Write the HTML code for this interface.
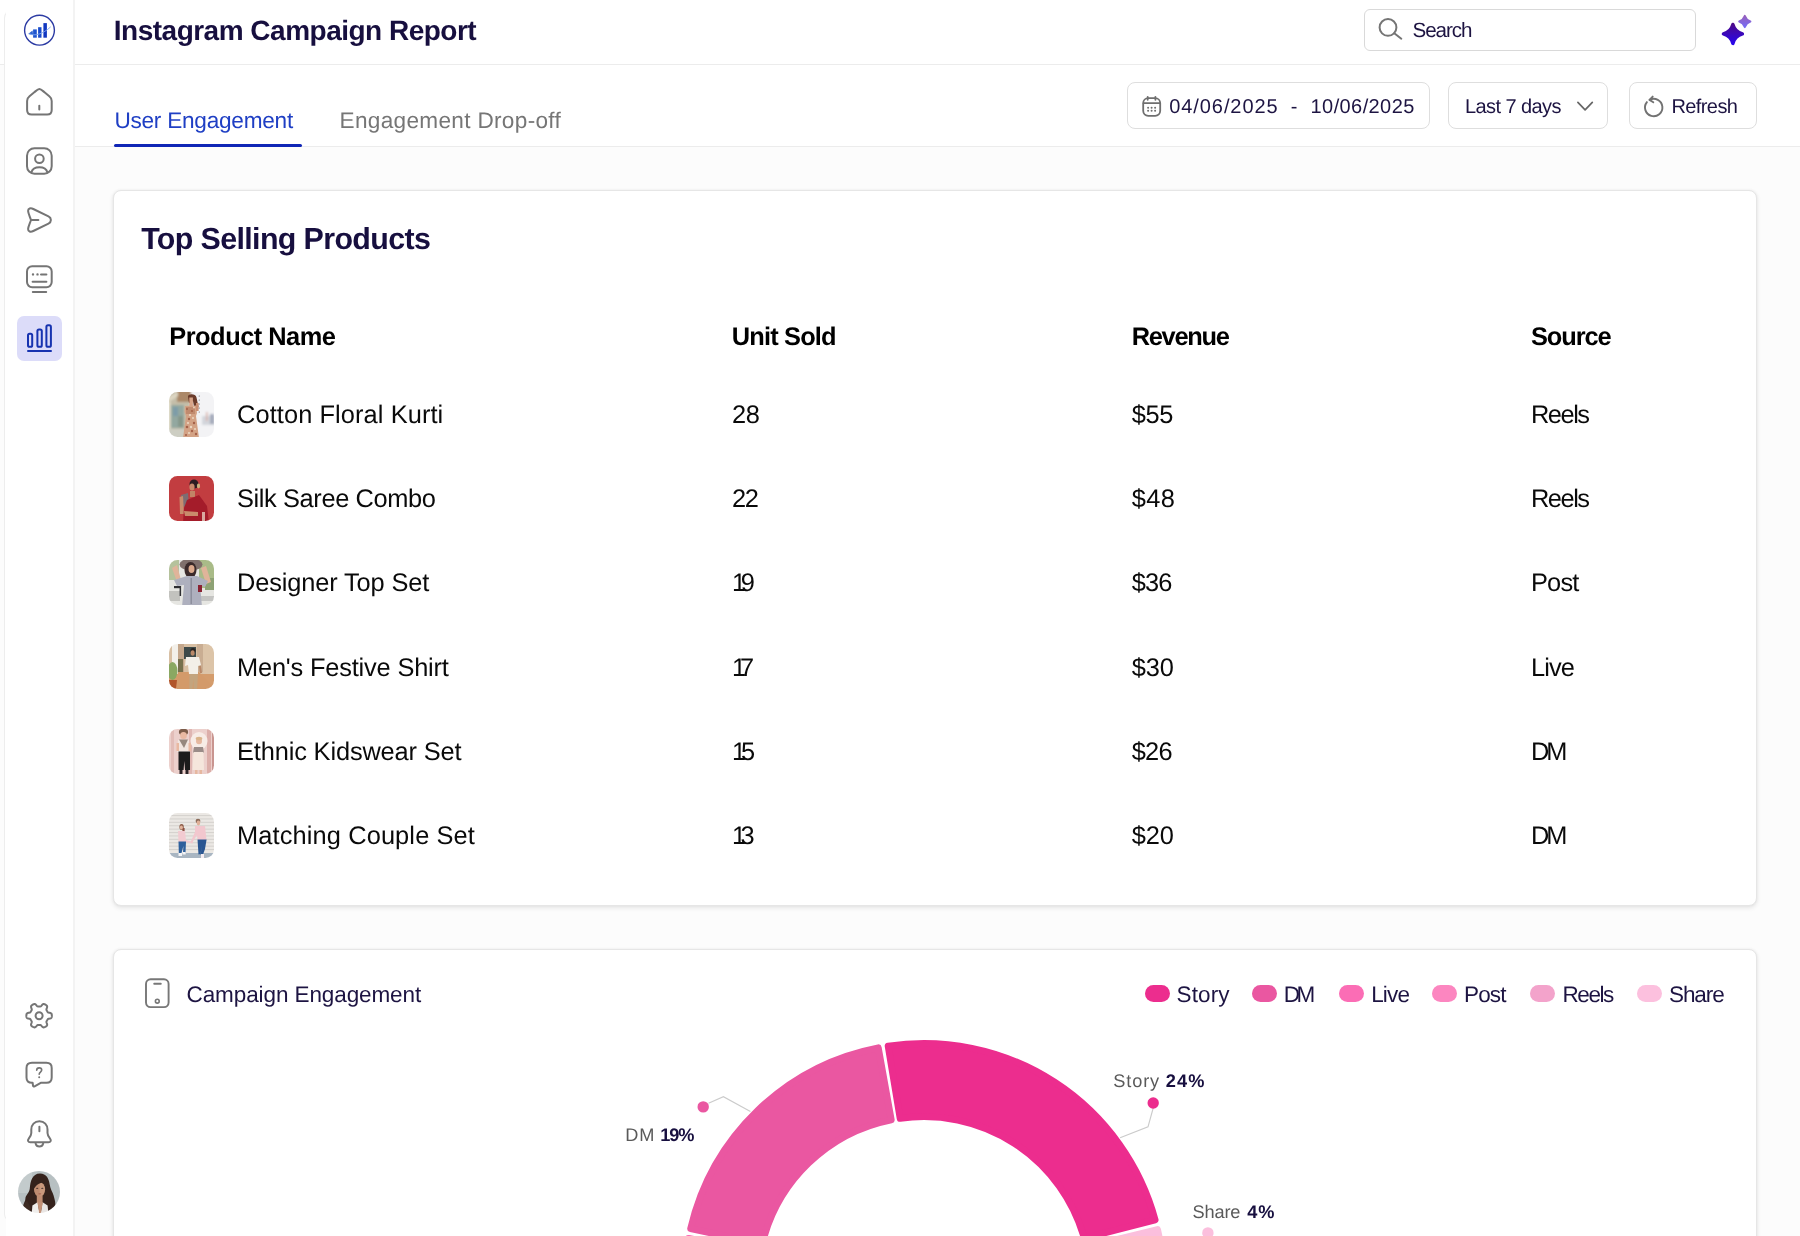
<!DOCTYPE html>
<html lang="en">
<head>
<meta charset="utf-8">
<title>Instagram Campaign Report</title>
<style>
html,body{margin:0;padding:0}
body{width:1800px;height:1236px;overflow:hidden;position:relative;background:#fcfcfc;
  font-family:"Liberation Sans",sans-serif;text-rendering:geometricPrecision;}
.abs{position:absolute}
.t{position:absolute;white-space:nowrap;line-height:1}
.box{position:absolute;box-sizing:border-box;background:#fff;border:1px solid #dedede;border-radius:8px}
.card{position:absolute;box-sizing:border-box;background:#fff;border:1px solid #e6e6e6;border-radius:8px;
  box-shadow:0 2px 5px rgba(0,0,0,.09),0 0 3px rgba(0,0,0,.05)}
.th{position:absolute;left:169px;width:45px;height:45px}
</style>
</head>
<body>
<!-- header + tab bar backgrounds -->
<div class="abs" style="left:0;top:0;width:1800px;height:64px;background:#fff;border-bottom:1px solid #ececec"></div>
<div class="abs" style="left:74px;top:65px;width:1726px;height:81px;background:#fff;border-bottom:1px solid #ececec"></div>
<!-- sidebar -->
<div class="abs" style="left:4px;top:10px;width:70px;height:1212px;box-sizing:border-box;background:#fff;border:1px solid #ededed;border-right:none;border-radius:8px 0 0 8px"></div>
<div class="abs" style="left:6px;top:0;width:67px;height:20px;background:#fff"></div>
<div class="abs" style="left:6px;top:1215px;width:67px;height:21px;background:#fff"></div>
<div class="abs" style="left:73px;top:0;width:2px;height:1236px;background:#f3f3f3"></div>
<!-- active tab underline -->
<div class="abs" style="left:114px;top:144px;width:188px;height:3px;background:#1026b6;border-radius:2px"></div>

<!-- header controls -->
<div class="box" style="left:1364px;top:9px;width:332px;height:42px;border-radius:6px;border-color:#d9d9d9"></div>
<div class="box" style="left:1127px;top:82px;width:303px;height:47px"></div>
<div class="box" style="left:1448px;top:82px;width:160px;height:47px"></div>
<div class="box" style="left:1629px;top:82px;width:128px;height:47px"></div>

<!-- cards -->
<div class="card" style="left:113px;top:190px;width:1644px;height:716px"></div>
<div class="card" style="left:113px;top:949px;width:1644px;height:400px"></div>

<svg class="abs" style="left:0;top:0" width="1800" height="1236" viewBox="0 0 1800 1236" fill="none" stroke-linecap="round" stroke-linejoin="round">
<!-- logo -->
<g>
<circle cx="39.5" cy="30.2" r="14.9" stroke="#2b3aa3" stroke-width="1.4" fill="#fff"/>
<rect x="33.1" y="29.4" width="3.7" height="8.3" fill="#1d55cf"/>
<rect x="38.1" y="27.2" width="3.4" height="10.5" fill="#184bcb"/>
<rect x="43.4" y="23.1" width="3.5" height="14.6" fill="#1238c0"/>
<path d="M28.1 33.9 L32.6 30.6 L33.1 35 Z" fill="#2a62cf"/>
<path d="M29.5 33.9 C35 36.5 43 34 50.4 27.1" stroke="#7fa6ee" stroke-width="0.9"/>
</g>
<!-- sidebar icons -->
<g stroke="#757575" stroke-width="2">
<!-- home -->
<path d="M34.3 92.3 C36.6 90.4 37.8 89.1 39.4 89.1 C41 89.1 42.2 90.4 44.5 92.3 L49.3 96.2 C50.9 97.5 51.7 98.7 51.7 100.9 L51.7 110 Q51.7 114.5 47.2 114.5 L31.6 114.5 Q27.1 114.5 27.1 110 L27.1 100.9 C27.1 98.7 27.9 97.5 29.5 96.2 Z"/>
<path d="M39.3 105.8 V109.6"/>
<!-- user square -->
<rect x="27" y="148.2" width="24.7" height="25.5" rx="7.5" ry="7.5"/>
<circle cx="39.4" cy="158.8" r="4.3"/>
<path d="M31.4 172.3 C33.2 165.4 45.6 165.4 47.4 172.3"/>
<!-- send -->
<path d="M31 220 C29.8 216.4 28.2 213.2 28.1 211 C28 208.4 30.6 207.7 33.3 209 L48.5 216.4 C51.7 218 51.7 222 48.5 223.6 L33.3 231 C30.6 232.3 28 231.6 28.1 229 C28.2 226.8 29.8 223.6 31 220 Z"/>
<path d="M31 220 H38.4"/>
<!-- monitor -->
<rect x="27" y="266.2" width="24.7" height="21" rx="5.2" ry="5.2"/>
<path d="M33 274.4 h0.01 M37.5 274.4 h0.01" stroke-width="2.4"/>
<path d="M41 274.4 H46.4 M32.6 281.7 H46.4 M32.8 292 H46.2"/>
<!-- gear (generated) -->
<path d="M51.85 1015.70 L51.84 1016.03 L51.82 1016.37 L51.78 1016.70 L51.72 1017.03 L51.63 1017.35 L51.49 1017.66 L51.26 1017.95 L50.90 1018.21 L50.37 1018.41 L49.73 1018.55 L49.08 1018.66 L48.55 1018.77 L48.18 1018.92 L47.93 1019.09 L47.75 1019.28 L47.60 1019.48 L47.47 1019.69 L47.35 1019.90 L47.23 1020.11 L47.11 1020.33 L46.99 1020.53 L46.87 1020.74 L46.74 1020.95 L46.63 1021.17 L46.53 1021.40 L46.45 1021.65 L46.43 1021.96 L46.49 1022.35 L46.65 1022.86 L46.88 1023.48 L47.08 1024.11 L47.17 1024.66 L47.13 1025.10 L46.99 1025.45 L46.80 1025.73 L46.56 1025.97 L46.31 1026.19 L46.04 1026.38 L45.76 1026.57 L45.48 1026.74 L45.18 1026.90 L44.88 1027.05 L44.58 1027.18 L44.26 1027.30 L43.94 1027.38 L43.59 1027.41 L43.23 1027.36 L42.83 1027.17 L42.39 1026.82 L41.95 1026.33 L41.53 1025.82 L41.17 1025.42 L40.86 1025.17 L40.58 1025.04 L40.32 1024.98 L40.07 1024.95 L39.83 1024.95 L39.58 1024.95 L39.34 1024.95 L39.10 1024.95 L38.86 1024.95 L38.62 1024.95 L38.37 1024.95 L38.13 1024.95 L37.88 1024.98 L37.62 1025.04 L37.34 1025.17 L37.03 1025.42 L36.67 1025.82 L36.25 1026.33 L35.81 1026.82 L35.37 1027.17 L34.97 1027.36 L34.61 1027.41 L34.26 1027.38 L33.94 1027.30 L33.62 1027.18 L33.32 1027.05 L33.02 1026.90 L32.73 1026.74 L32.44 1026.57 L32.16 1026.38 L31.89 1026.19 L31.64 1025.97 L31.40 1025.73 L31.21 1025.45 L31.07 1025.10 L31.03 1024.66 L31.12 1024.11 L31.32 1023.48 L31.55 1022.86 L31.71 1022.35 L31.77 1021.96 L31.75 1021.65 L31.67 1021.40 L31.57 1021.17 L31.46 1020.95 L31.33 1020.74 L31.21 1020.53 L31.09 1020.33 L30.97 1020.11 L30.85 1019.90 L30.73 1019.69 L30.60 1019.48 L30.45 1019.28 L30.27 1019.09 L30.02 1018.92 L29.65 1018.77 L29.12 1018.66 L28.47 1018.55 L27.83 1018.41 L27.30 1018.21 L26.94 1017.95 L26.71 1017.66 L26.57 1017.35 L26.48 1017.03 L26.42 1016.70 L26.38 1016.37 L26.36 1016.03 L26.35 1015.70 L26.36 1015.37 L26.38 1015.03 L26.42 1014.70 L26.48 1014.37 L26.57 1014.05 L26.71 1013.74 L26.94 1013.45 L27.30 1013.19 L27.83 1012.99 L28.47 1012.85 L29.12 1012.74 L29.65 1012.63 L30.02 1012.48 L30.27 1012.31 L30.45 1012.12 L30.60 1011.92 L30.73 1011.71 L30.85 1011.50 L30.97 1011.29 L31.09 1011.08 L31.21 1010.87 L31.33 1010.66 L31.46 1010.45 L31.57 1010.23 L31.67 1010.00 L31.75 1009.75 L31.77 1009.44 L31.71 1009.05 L31.55 1008.54 L31.32 1007.92 L31.12 1007.29 L31.03 1006.74 L31.07 1006.30 L31.21 1005.95 L31.40 1005.67 L31.64 1005.43 L31.89 1005.21 L32.16 1005.02 L32.44 1004.83 L32.72 1004.66 L33.02 1004.50 L33.32 1004.35 L33.62 1004.22 L33.94 1004.10 L34.26 1004.02 L34.61 1003.99 L34.97 1004.04 L35.37 1004.23 L35.81 1004.58 L36.25 1005.07 L36.67 1005.58 L37.03 1005.98 L37.34 1006.23 L37.62 1006.36 L37.88 1006.42 L38.13 1006.45 L38.37 1006.45 L38.62 1006.45 L38.86 1006.45 L39.10 1006.45 L39.34 1006.45 L39.58 1006.45 L39.83 1006.45 L40.07 1006.45 L40.32 1006.42 L40.58 1006.36 L40.86 1006.23 L41.17 1005.98 L41.53 1005.58 L41.95 1005.07 L42.39 1004.58 L42.83 1004.23 L43.23 1004.04 L43.59 1003.99 L43.94 1004.02 L44.26 1004.10 L44.58 1004.22 L44.88 1004.35 L45.18 1004.50 L45.48 1004.66 L45.76 1004.83 L46.04 1005.02 L46.31 1005.21 L46.56 1005.43 L46.80 1005.67 L46.99 1005.95 L47.13 1006.30 L47.17 1006.74 L47.08 1007.29 L46.88 1007.92 L46.65 1008.54 L46.49 1009.05 L46.43 1009.44 L46.45 1009.75 L46.53 1010.00 L46.63 1010.23 L46.74 1010.45 L46.87 1010.66 L46.99 1010.87 L47.11 1011.08 L47.23 1011.29 L47.35 1011.50 L47.47 1011.71 L47.60 1011.92 L47.75 1012.12 L47.93 1012.31 L48.18 1012.48 L48.55 1012.63 L49.08 1012.74 L49.73 1012.85 L50.37 1012.99 L50.90 1013.19 L51.26 1013.45 L51.49 1013.74 L51.63 1014.05 L51.72 1014.37 L51.78 1014.70 L51.82 1015.03 L51.84 1015.37 Z"/>
<circle cx="39.1" cy="1015.7" r="3.5"/>
<!-- help chat -->
<path d="M32 1062.8 H46.4 Q51.7 1062.8 51.7 1068 V1077.4 Q51.7 1082.7 46.4 1082.7 H41.2 L34.6 1086.4 Q33.2 1087 33 1085.5 L32.6 1082.7 H32 Q26.5 1082.7 26.5 1077.4 V1068 Q26.5 1062.8 32 1062.8 Z"/>
<path d="M36.7 1070.3 C36.7 1068.6 37.8 1067.9 39.2 1067.9 C40.7 1067.9 41.7 1068.8 41.7 1070.1 C41.7 1072 39.2 1072.1 39.2 1074.2" stroke-width="1.6"/>
<path d="M39.2 1077.3 h0.01" stroke-width="2"/>
<!-- bell -->
<path d="M39.4 1121.2 C34.5 1121.2 31.3 1124.8 31.3 1129.5 L31.3 1133 C31.3 1135.5 30 1137.2 28.6 1138.8 C27.3 1140.4 28.2 1142.3 30.3 1142.3 L48.5 1142.3 C50.6 1142.3 51.5 1140.4 50.2 1138.8 C48.8 1137.2 47.5 1135.5 47.5 1133 L47.5 1129.5 C47.5 1124.8 44.3 1121.2 39.4 1121.2 Z"/>
<path d="M35.6 1143.4 C36.2 1145.7 37.7 1146.5 39.4 1146.5 C41.1 1146.5 42.6 1145.7 43.2 1143.4"/>
<path d="M39.4 1126.7 V1131.2"/>
</g>
<!-- active analytics -->
<rect x="17" y="316" width="45" height="45" rx="7" ry="7" fill="#dcdcf9"/>
<g stroke="#1733b0" stroke-width="2">
<rect x="28" y="333.8" width="4.2" height="13" rx="1.6"/>
<rect x="37.4" y="329.5" width="4.4" height="17.3" rx="1.6"/>
<rect x="46.4" y="325.3" width="4.5" height="21.5" rx="1.6"/>
<path d="M28 350.9 H51"/>
</g>
<!-- search icon -->
<g stroke="#757575" stroke-width="2">
<circle cx="1388" cy="27.4" r="8.4"/>
<path d="M1394.3 33.2 L1401.3 38.7"/>
</g>
<!-- sparkle -->
<defs><linearGradient id="spk" x1="0" y1="0" x2="0" y2="1"><stop offset="0" stop-color="#4c0a8c"/><stop offset="1" stop-color="#2906ea"/></linearGradient>
<linearGradient id="spk2" x1="0" y1="0" x2="0" y2="1"><stop offset="0" stop-color="#9660be"/><stop offset="1" stop-color="#766cf4"/></linearGradient></defs>
<path d="M1732.90 24.45 A13.71 13.71 0 0 0 1742.40 33.95 A13.71 13.71 0 0 0 1732.90 43.45 A13.71 13.71 0 0 0 1723.40 33.95 A13.71 13.71 0 0 0 1732.90 24.45 Z" fill="url(#spk)" stroke="url(#spk)" stroke-width="3.4"/>
<path d="M1744.80 16.00 A9.01 9.01 0 0 0 1750.30 21.50 A9.01 9.01 0 0 0 1744.80 27.00 A9.01 9.01 0 0 0 1739.30 21.50 A9.01 9.01 0 0 0 1744.80 16.00 Z" fill="url(#spk2)" stroke="url(#spk2)" stroke-width="2.2"/>
<!-- calendar -->
<g stroke="#6f6f6f" stroke-width="1.8">
<rect x="1143.2" y="98.2" width="17" height="17.6" rx="5" ry="5"/>
<path d="M1147.7 96.8 V99.8 M1155.4 96.8 V99.8 M1143.6 103.2 H1159.8"/>
<path d="M1148.1 107.8 h0.01 M1151.6 107.8 h0.01 M1155.1 107.8 h0.01 M1148.1 110.7 h0.01 M1151.6 110.7 h0.01 M1155.1 110.7 h0.01" stroke-width="2"/>
</g>
<!-- chevron -->
<path d="M1577.9 102.4 L1585.1 109.8 L1592.3 102.4" stroke="#666" stroke-width="1.7"/>
<!-- refresh -->
<g stroke="#727272" stroke-width="1.9">
<path d="M1649.64 99.85 A8.7 8.7 0 1 1 1646.9 102.12"/>
<path d="M1652.7 96.6 L1649.5 99.9 L1653.3 102.2"/>
</g>
<!-- phone -->
<g stroke="#777" stroke-width="1.9">
<rect x="146" y="979.3" width="22.6" height="27.8" rx="4.6" ry="4.6"/>
<path d="M154.2 983.8 H160.8"/>
<circle cx="157.3" cy="1001.2" r="1.9" stroke-width="1.6"/>
</g>
</svg>

<svg width="0" height="0" style="position:absolute"><defs>
<clipPath id="rc"><rect x="0" y="0" width="45" height="45" rx="8.5" ry="8.5"/></clipPath>
<clipPath id="cc"><circle cx="21" cy="21" r="21"/></clipPath>
<filter id="b1" x="-10%" y="-10%" width="120%" height="120%"><feGaussianBlur stdDeviation="0.7"/></filter>
<filter id="b2" x="-10%" y="-10%" width="120%" height="120%"><feGaussianBlur stdDeviation="1.2"/></filter>
</defs></svg>
<!-- 1 cotton floral kurti -->
<svg class="th" style="top:391.5px" viewBox="0 0 45 45"><g clip-path="url(#rc)"><g filter="url(#b2)">
<rect x="-3" y="-3" width="51" height="51" fill="#f1f1f3"/>
<rect x="-3" y="-3" width="24" height="51" fill="#c4bea9"/>
<rect x="8" y="-3" width="14" height="13" fill="#ab8868"/>
<path d="M-3 6 L9 0 L9 4 L-3 12 Z" fill="#ddd6c2"/>
<rect x="2" y="13" width="13" height="23" fill="#93a8a0"/>
<rect x="4" y="15" width="5" height="9" fill="#7d9ca8"/>
<rect x="9" y="24" width="5" height="11" fill="#86978a"/>
<rect x="-2" y="10" width="3.5" height="30" fill="#e6e1cf"/>
<rect x="-3" y="37" width="19" height="11" fill="#cdcec3"/>
<rect x="29.5" y="-3" width="18" height="51" fill="#f3f3f5"/>
<rect x="33" y="24" width="13" height="9" fill="#d3d6dc"/>
<rect x="41" y="22" width="4" height="10" fill="#a4aabc"/>
<rect x="37" y="20" width="1.6" height="9" fill="#d8b0a8"/>
</g><g filter="url(#b1)">
<path d="M19 4.5 C19 1.5 27 1.5 27.5 5.5 L29.5 15 L25 15 L24 9 L20 11 Z" fill="#6a3a2a"/>
<path d="M20.3 5.5 h3.6 v8.5 h-3.6z" fill="#d8a488"/>
<path d="M16 14 L27 13.5 L28 21 L27 24 L30 46 L14 46 L17 24 L15.5 20 Z" fill="#d3a285"/>
<path d="M17 15 h9 v7 h-9z" fill="#c08a6e"/>
<path d="M27 11 h2.6 v8 h-2.6z" fill="#c98e72"/>
<g fill="#a5624a"><circle cx="18" cy="17" r="1"/><circle cx="23" cy="19" r="1.1"/><circle cx="20" cy="27" r="1.2"/><circle cx="25" cy="31" r="1.2"/><circle cx="18" cy="35" r="1.3"/><circle cx="23" cy="39" r="1.2"/><circle cx="27" cy="42" r="1.2"/><circle cx="17" cy="43" r="1.1"/></g>
<g fill="#ecd8c2"><circle cx="21" cy="23" r="1.1"/><circle cx="24" cy="26" r="1"/><circle cx="19" cy="31" r="1.1"/><circle cx="22" cy="35" r="1.2"/><circle cx="26" cy="37" r="1"/><circle cx="20" cy="41" r="1.1"/><circle cx="25" cy="15.5" r=".9"/></g>
<g fill="#4a4a52"><circle cx="30.2" cy="4" r=".5"/><circle cx="30.2" cy="8" r=".5"/><circle cx="30.2" cy="12" r=".5"/><circle cx="30.2" cy="16" r=".5"/><circle cx="30.2" cy="20" r=".5"/></g>
</g></g></svg>
<!-- 2 silk saree -->
<svg class="th" style="top:475.8px" viewBox="0 0 45 45"><g clip-path="url(#rc)"><g filter="url(#b1)">
<rect x="-2" y="-2" width="49" height="49" fill="#c23d41"/>
<ellipse cx="25" cy="8" rx="4.5" ry="4.5" fill="#2b1c22"/>
<ellipse cx="23" cy="11" rx="2.6" ry="3.6" fill="#c78a6c"/>
<ellipse cx="29.5" cy="10" rx="1.6" ry="2.4" fill="#c9b27c"/>
<path d="M21 15 h5 v6 h-5z" fill="#c18466"/>
<path d="M12 19 L19 17 L20 30 L13 31 Z" fill="#7d6c72"/>
<path d="M10.5 21 L14 20 L15 38 L11 38 Z" fill="#c98c6c"/>
<path d="M18 24 L30 19 L38 30 L40 47 L14 47 L15 32 Z" fill="#a41c2b"/>
<path d="M15 35 L29 36 L29 40 L16 40 Z" fill="#c98c6c"/>
<path d="M33 36 h3 v11 h-3z" fill="#d9a9a0"/>
</g></g></svg>
<!-- 3 designer top set -->
<svg class="th" style="top:560.1px" viewBox="0 0 45 45"><g clip-path="url(#rc)"><g filter="url(#b1)">
<rect x="-2" y="-2" width="49" height="49" fill="#e6e6e2"/>
<rect x="-2" y="-2" width="12" height="22" fill="#b5c29c"/>
<rect x="30" y="-2" width="17" height="30" fill="#a9bb88"/>
<rect x="36" y="18" width="11" height="12" fill="#8ea274"/>
<rect x="-2" y="31" width="13" height="10" fill="#c2c2be"/>
<rect x="5" y="26" width="7" height="2.2" fill="#2e2e32"/>
<rect x="10.6" y="26" width="1.5" height="10" fill="#2e2e32"/>
<rect x="28" y="36" width="19" height="5" fill="#c4c4c2"/>
<ellipse cx="22" cy="4.5" rx="11.5" ry="6" fill="#80706c"/>
<ellipse cx="21.5" cy="10" rx="6" ry="8" fill="#3a2a2a"/>
<ellipse cx="22.5" cy="9" rx="3" ry="4" fill="#dba98c"/>
<path d="M3 8 L8 5 L12 20 L8 22 Z" fill="#e0b49a"/>
<path d="M32 8 L37 6 L42 22 L37 24 Z" fill="#e0b49a"/>
<path d="M5 20 L18 16 L28 16 L39 21 L36 27 L31 25 L33 47 L13 47 L15 25 L8 26 Z" fill="#aeb0be"/>
<rect x="21.5" y="18" width="1.4" height="26" fill="#8a8c9a"/>
<rect x="29" y="25" width="4" height="7" fill="#8a2132"/>
</g></g></svg>
<!-- 4 men's festive shirt -->
<svg class="th" style="top:644.4px" viewBox="0 0 45 45"><g clip-path="url(#rc)"><g filter="url(#b1)">
<rect x="-2" y="-2" width="49" height="49" fill="#d8bfa3"/>
<rect x="3" y="-2" width="6" height="34" fill="#f3f0ea"/>
<rect x="9" y="-2" width="6" height="30" fill="#c4a78c"/>
<rect x="28" y="-2" width="6" height="30" fill="#c9ad92"/>
<rect x="34" y="-2" width="13" height="40" fill="#dcc4a8"/>
<rect x="15" y="3" width="12" height="12" fill="#3c4a48"/>
<rect x="-2" y="30" width="49" height="17" fill="#d49c6c"/>
<path d="M9 28 L30 28 L47 45 L47 47 L8 47 Z" fill="#d39a6a"/>
<rect x="9" y="15" width="5" height="13" fill="#76704e"/>
<ellipse cx="3.5" cy="27" rx="5" ry="9" fill="#8aa862"/>
<path d="M-1 36 h9 l-1 9 h-7z" fill="#b1542c"/>
<ellipse cx="24" cy="6.5" rx="2.6" ry="2.6" fill="#2a2320"/>
<ellipse cx="23.6" cy="9" rx="2" ry="2.8" fill="#b98868"/>
<path d="M17 13 L30 13 L32 21 L29 22 L29 30 L20 30 L19 21 L16 22 Z" fill="#f3efe8"/>
<path d="M20.5 30 h8.5 l-1 17 h-3.3 l-.4-12 l-1 12 h-3z" fill="#c3a47e"/>
<path d="M30 22 l2 0 l1 7 l-2 0z" fill="#b98868"/>
</g></g></svg>
<!-- 5 ethnic kidswear -->
<svg class="th" style="top:728.7px" viewBox="0 0 45 45"><g clip-path="url(#rc)"><g filter="url(#b1)">
<rect x="-2" y="-2" width="49" height="49" fill="#ecd0cc"/>
<rect x="2" y="-2" width="3" height="49" fill="#e2bdb8"/>
<rect x="20" y="-2" width="3" height="49" fill="#dfb6b2"/>
<rect x="38" y="-2" width="4" height="49" fill="#dcaea9"/>
<rect x="43" y="-2" width="4" height="49" fill="#c99590"/>
<ellipse cx="30" cy="12" rx="8.5" ry="9" fill="#f7ece6"/>
<ellipse cx="14.5" cy="3" rx="4.6" ry="3.2" fill="#7c5c4a"/>
<ellipse cx="14.5" cy="6.5" rx="3.4" ry="3.6" fill="#e9b9a2"/>
<ellipse cx="30" cy="12" rx="3" ry="3.3" fill="#e6b8a0"/>
<ellipse cx="30" cy="9.5" rx="3.3" ry="1.8" fill="#d9b48a"/>
<path d="M9 11 L20 11 L21 23 L8 23 Z" fill="#f1e6e0"/>
<path d="M10 10.5 L19 10.5 L15 19 Z" fill="#96887e"/>
<path d="M7.5 14 h2.5 v8 h-2.5z M19.5 14 h2.5 v8 h-2.5z" fill="#e9b9a2"/>
<path d="M9.5 22.5 L21 22.5 L21 41 L16 41 L15.3 32 L14.6 41 L9.5 41 Z" fill="#1c1c1e"/>
<path d="M10.5 41 h3 v4 h-3z M16.5 41 h3 v4 h-3z" fill="#2a2226"/>
<path d="M25 18 L34 18 L35 24 L24 24 Z" fill="#9a8c88"/>
<path d="M24.5 23 L34.5 23 L35 41 L23.5 41 Z" fill="#f5e6dc"/>
<path d="M26 41 h2.5 v4 h-2.5z M30.5 41 h2.5 v4 h-2.5z" fill="#e6b8a0"/>
</g></g></svg>
<!-- 6 matching couple -->
<svg class="th" style="top:813px" viewBox="0 0 45 45"><g clip-path="url(#rc)"><g filter="url(#b1)">
<rect x="-2" y="-2" width="49" height="49" fill="#ebe8e4"/>
<g fill="#d6d3cf"><rect x="-2" y="2" width="49" height="1.1"/><rect x="-2" y="5.4" width="49" height="1.1"/><rect x="-2" y="8.8" width="49" height="1.1"/><rect x="-2" y="12.2" width="49" height="1.1"/><rect x="-2" y="15.6" width="49" height="1.1"/><rect x="-2" y="19" width="49" height="1.1"/><rect x="-2" y="22.4" width="49" height="1.1"/><rect x="-2" y="25.8" width="49" height="1.1"/><rect x="-2" y="29.2" width="49" height="1.1"/><rect x="-2" y="32.6" width="49" height="1.1"/><rect x="-2" y="36" width="49" height="1.1"/></g>
<rect x="-2" y="40" width="49" height="7" fill="#a9b6c2"/>
<ellipse cx="12.6" cy="14" rx="2.2" ry="3" fill="#8c5c48"/>
<rect x="13.4" y="15" width="2.2" height="8" fill="#8c5040"/>
<ellipse cx="12.4" cy="14.6" rx="1.5" ry="2" fill="#e3b49c"/>
<path d="M9 18 L16 18 L17 27 L24 29 L23.6 30.4 L16 29 L9.5 29 Z" fill="#f2cbd1"/>
<path d="M9.5 28.5 L17 28.5 L16.5 40 L14 40 L14.4 33 L12.5 40 L9.8 40 Z" fill="#2f609c"/>
<path d="M9.5 40 h3.5 v3 h-3.5z M13.5 39 h3.2 v2.6 h-3.2z" fill="#f4f4f6"/>
<ellipse cx="29" cy="8" rx="2.4" ry="2.2" fill="#8c6c5a"/>
<ellipse cx="29.4" cy="10" rx="1.8" ry="2.4" fill="#e0b098"/>
<path d="M26 13 L36 13 L37.5 27 L28.5 27 L28 22 L23 30 L21.6 29 L26 19 Z" fill="#f2c7ce"/>
<path d="M28.5 26.5 L37.6 26.5 L36 36 L33.5 43 L31.5 41.5 L33 33 L31.5 41 L29.5 41.5 Z" fill="#2a5792"/>
<path d="M32 41 h3 v4 h-3z" fill="#f6eef2"/>
</g></g></svg>
<!-- avatar -->
<svg class="abs" style="left:18.4px;top:1170.6px" width="42" height="42" viewBox="0 0 42 42"><g clip-path="url(#cc)"><g filter="url(#b1)">
<rect x="-2" y="-2" width="46" height="46" fill="#b7c0c2"/>
<rect x="-2" y="-2" width="16" height="24" fill="#c3cbcc"/>
<path d="M22 2.6 C28.5 2.6 31 8 31.6 13 C32.2 18 34.5 20.5 35.6 24.5 C36.8 29 38 32 37 36 C36 40 32 43 28 45 L13 45 C8 43 4.5 40 5 35.5 C5.4 32 7.5 30.5 7.4 27.5 C7.3 24.5 11.4 22 11.8 17.5 C12.3 11 14 2.6 22 2.6 Z" fill="#35241e"/>
<path d="M9 30 C6 31 5 35 7 38 C9 40 12 40 13 37 Z" fill="#3d2a22"/>
<ellipse cx="21.6" cy="18.6" rx="5.5" ry="7.4" fill="#c9987c"/>
<path d="M16.2 17 C16.4 12.5 19 10.8 21.5 10.8 L21.5 26 C18.5 25.5 16.2 22 16.2 17 Z" fill="#b98669" opacity=".7"/>
<path d="M18.8 24.5 h5.8 v9 h-5.8z" fill="#bf8d72"/>
<path d="M15.5 13.5 C17 9 24.5 7.5 28.6 12.5 C25.5 11.2 20 11 16.2 17.5 Z" fill="#35241e"/>
<path d="M14.4 34.6 L19.6 31.2 L21.8 44 L13.6 44 Z" fill="#f0eeec"/>
<path d="M29.6 34.6 L24.6 31.2 L22.4 44 L30.6 44 Z" fill="#e9e6e4"/>
<path d="M19.4 31.2 L21.6 44 L22.6 44 L24.8 31.2 Z" fill="#c39176"/>
<g fill="#3a2a26"><ellipse cx="19.2" cy="17.3" rx="1.1" ry=".55"/><ellipse cx="24.3" cy="17.3" rx="1.1" ry=".55"/></g>
<ellipse cx="21.8" cy="22.8" rx="1.5" ry=".6" fill="#a8604f"/>
</g></g></svg>

<svg class="abs" style="left:0;top:0" width="1800" height="1236" viewBox="0 0 1800 1236">
<path d="M888.14 1046.10 A239.60 239.60 0 0 1 1155.14 1219.88 L1084.25 1238.17 A166.40 166.40 0 0 0 900.12 1118.32 Z" fill="#ec2d8e" stroke="#ec2d8e" stroke-width="6.8" stroke-linejoin="round"/><path d="M1157.56 1229.56 A239.60 239.60 0 0 1 1163.60 1281.52 L1090.39 1280.94 A166.40 166.40 0 0 0 1086.44 1246.90 Z" fill="#fbbfdd" stroke="#fbbfdd" stroke-width="6.8" stroke-linejoin="round"/><path d="M690.67 1228.56 A239.60 239.60 0 0 1 878.31 1047.80 L891.25 1119.85 A166.40 166.40 0 0 0 762.19 1244.18 Z" fill="#ea57a1" stroke="#ea57a1" stroke-width="6.8" stroke-linejoin="round"/><path d="M762.52 1460.01 A239.60 239.60 0 0 1 688.60 1238.32 L760.33 1252.99 A166.40 166.40 0 0 0 811.09 1405.23 Z" fill="#fb6db5" stroke="#fb6db5" stroke-width="6.8" stroke-linejoin="round"/>
<path d="M1153.2 1108 L1148 1126.8 L1120.1 1137.8" fill="none" stroke="#cbcbcb" stroke-width="1.15"/>
<circle cx="1153.2" cy="1103" r="5.7" fill="#ec2d8e"/>
<path d="M708.5 1103.2 L723.4 1096.7 L750.4 1111.6" fill="none" stroke="#cbcbcb" stroke-width="1.15"/>
<circle cx="703.2" cy="1106.9" r="5.7" fill="#ea57a1"/>
<circle cx="1207.9" cy="1232.9" r="5.7" fill="#fbbfdd"/>
</svg>
<div class="abs" style="left:1145.0px;top:985px;width:25px;height:17px;border-radius:9px;background:#ec2d8e"></div>
<div class="abs" style="left:1251.8px;top:985px;width:25px;height:17px;border-radius:9px;background:#ea57a1"></div>
<div class="abs" style="left:1338.9px;top:985px;width:25px;height:17px;border-radius:9px;background:#fb6db5"></div>
<div class="abs" style="left:1431.7px;top:985px;width:25px;height:17px;border-radius:9px;background:#fc86c0"></div>
<div class="abs" style="left:1530.1px;top:985px;width:25px;height:17px;border-radius:9px;background:#f3a3cb"></div>
<div class="abs" style="left:1636.9px;top:985px;width:25px;height:17px;border-radius:9px;background:#fcc0de"></div>

<div id="txt" style="position:absolute;left:0;top:0;width:1800px;height:1236px;will-change:transform"><span class="t" style="left:113.80px;top:15px;font-size:28.00px;line-height:32px;letter-spacing:-0.504px;color:#170f3f;font-weight:700;">Instagram Campaign Report</span>
<span class="t" style="left:114.40px;top:108px;font-size:22.60px;line-height:26px;letter-spacing:-0.236px;color:#1f3fc4;">User Engagement</span>
<span class="t" style="left:339.50px;top:108px;font-size:22.60px;line-height:26px;letter-spacing:0.317px;color:#767676;">Engagement Drop-off</span>
<span class="t" style="left:1412.50px;top:19px;font-size:20.60px;line-height:24px;letter-spacing:-1.060px;color:#1d1442;">Search</span>
<span class="t" style="left:1169.30px;top:96px;font-size:20.00px;line-height:23px;letter-spacing:0.911px;color:#1d1442;">04/06/2025</span>
<span class="t" style="left:1290.80px;top:96px;font-size:20.00px;line-height:23px;letter-spacing:0.000px;color:#1d1442;">-</span>
<span class="t" style="left:1310.60px;top:96px;font-size:20.00px;line-height:23px;letter-spacing:0.400px;color:#1d1442;">10/06/2025</span>
<span class="t" style="left:1464.90px;top:96px;font-size:20.00px;line-height:23px;letter-spacing:-0.570px;color:#1d1442;">Last 7 days</span>
<span class="t" style="left:1671.40px;top:96px;font-size:20.00px;line-height:23px;letter-spacing:-0.583px;color:#1d1442;">Refresh</span>
<span class="t" style="left:141.20px;top:222px;font-size:30.40px;line-height:35px;letter-spacing:-0.632px;color:#170f3f;font-weight:700;">Top Selling Products</span>
<span class="t" style="left:169.30px;top:323px;font-size:25.40px;line-height:29px;letter-spacing:-0.500px;color:#000;font-weight:700;">Product Name</span>
<span class="t" style="left:731.70px;top:323px;font-size:25.40px;line-height:29px;letter-spacing:-0.812px;color:#000;font-weight:700;">Unit Sold</span>
<span class="t" style="left:1131.70px;top:323px;font-size:25.40px;line-height:29px;letter-spacing:-1.267px;color:#000;font-weight:700;">Revenue</span>
<span class="t" style="left:1531.00px;top:323px;font-size:25.40px;line-height:29px;letter-spacing:-1.080px;color:#000;font-weight:700;">Source</span>
<span class="t" style="left:237.00px;top:401px;font-size:25.40px;line-height:29px;letter-spacing:0.089px;color:#0a0a0a;">Cotton Floral Kurti</span>
<span class="t" style="left:732.00px;top:401px;font-size:25.40px;line-height:29px;letter-spacing:-0.300px;color:#0a0a0a;">28</span>
<span class="t" style="left:1131.70px;top:401px;font-size:25.40px;line-height:29px;letter-spacing:-0.400px;color:#0a0a0a;">$55</span>
<span class="t" style="left:1531.00px;top:401px;font-size:25.40px;line-height:29px;letter-spacing:-1.475px;color:#0a0a0a;">Reels</span>
<span class="t" style="left:237.00px;top:485px;font-size:25.40px;line-height:29px;letter-spacing:-0.380px;color:#0a0a0a;">Silk Saree Combo</span>
<span class="t" style="left:732.00px;top:485px;font-size:25.40px;line-height:29px;letter-spacing:-1.300px;color:#0a0a0a;">22</span>
<span class="t" style="left:1131.70px;top:485px;font-size:25.40px;line-height:29px;letter-spacing:0.450px;color:#0a0a0a;">$48</span>
<span class="t" style="left:1531.00px;top:485px;font-size:25.40px;line-height:29px;letter-spacing:-1.475px;color:#0a0a0a;">Reels</span>
<span class="t" style="left:237.00px;top:569px;font-size:25.40px;line-height:29px;letter-spacing:-0.140px;color:#0a0a0a;">Designer Top Set</span>
<span class="t" style="left:732.00px;top:569px;font-size:25.40px;line-height:29px;letter-spacing:-5.300px;color:#0a0a0a;">19</span>
<span class="t" style="left:1131.70px;top:569px;font-size:25.40px;line-height:29px;letter-spacing:-0.900px;color:#0a0a0a;">$36</span>
<span class="t" style="left:1531.00px;top:569px;font-size:25.40px;line-height:29px;letter-spacing:-0.833px;color:#0a0a0a;">Post</span>
<span class="t" style="left:237.00px;top:654px;font-size:25.40px;line-height:29px;letter-spacing:-0.178px;color:#0a0a0a;">Men&#39;s Festive Shirt</span>
<span class="t" style="left:732.00px;top:654px;font-size:25.40px;line-height:29px;letter-spacing:-6.100px;color:#0a0a0a;">17</span>
<span class="t" style="left:1131.70px;top:654px;font-size:25.40px;line-height:29px;letter-spacing:-0.050px;color:#0a0a0a;">$30</span>
<span class="t" style="left:1531.00px;top:654px;font-size:25.40px;line-height:29px;letter-spacing:-0.867px;color:#0a0a0a;">Live</span>
<span class="t" style="left:237.00px;top:738px;font-size:25.40px;line-height:29px;letter-spacing:-0.144px;color:#0a0a0a;">Ethnic Kidswear Set</span>
<span class="t" style="left:732.00px;top:738px;font-size:25.40px;line-height:29px;letter-spacing:-5.000px;color:#0a0a0a;">15</span>
<span class="t" style="left:1131.70px;top:738px;font-size:25.40px;line-height:29px;letter-spacing:-0.700px;color:#0a0a0a;">$26</span>
<span class="t" style="left:1531.00px;top:738px;font-size:25.40px;line-height:29px;letter-spacing:-3.200px;color:#0a0a0a;">DM</span>
<span class="t" style="left:237.00px;top:822px;font-size:25.40px;line-height:29px;letter-spacing:0.122px;color:#0a0a0a;">Matching Couple Set</span>
<span class="t" style="left:732.00px;top:822px;font-size:25.40px;line-height:29px;letter-spacing:-5.600px;color:#0a0a0a;">13</span>
<span class="t" style="left:1131.70px;top:822px;font-size:25.40px;line-height:29px;letter-spacing:-0.050px;color:#0a0a0a;">$20</span>
<span class="t" style="left:1531.00px;top:822px;font-size:25.40px;line-height:29px;letter-spacing:-3.200px;color:#0a0a0a;">DM</span>
<span class="t" style="left:186.50px;top:982px;font-size:22.50px;line-height:26px;letter-spacing:-0.094px;color:#1d1442;">Campaign Engagement</span>
<span class="t" style="left:1176.60px;top:982px;font-size:22.50px;line-height:26px;letter-spacing:0.100px;color:#1d1442;">Story</span>
<span class="t" style="left:1283.80px;top:982px;font-size:22.50px;line-height:26px;letter-spacing:-3.600px;color:#1d1442;">DM</span>
<span class="t" style="left:1371.20px;top:982px;font-size:22.50px;line-height:26px;letter-spacing:-0.833px;color:#1d1442;">Live</span>
<span class="t" style="left:1464.00px;top:982px;font-size:22.50px;line-height:26px;letter-spacing:-0.833px;color:#1d1442;">Post</span>
<span class="t" style="left:1562.60px;top:982px;font-size:22.50px;line-height:26px;letter-spacing:-1.475px;color:#1d1442;">Reels</span>
<span class="t" style="left:1669.00px;top:982px;font-size:22.50px;line-height:26px;letter-spacing:-1.075px;color:#1d1442;">Share</span>
<span class="t" style="left:1113.30px;top:1071px;font-size:18.20px;line-height:21px;letter-spacing:0.850px;color:#5a5a5a;">Story</span>
<span class="t" style="left:1165.70px;top:1071px;font-size:18.20px;line-height:21px;letter-spacing:1.150px;color:#170f3f;font-weight:700;">24%</span>
<span class="t" style="left:1192.40px;top:1202px;font-size:18.20px;line-height:21px;letter-spacing:-0.125px;color:#5a5a5a;">Share</span>
<span class="t" style="left:1247.30px;top:1202px;font-size:18.20px;line-height:21px;letter-spacing:0.800px;color:#170f3f;font-weight:700;">4%</span>
<span class="t" style="left:625.30px;top:1125px;font-size:18.20px;line-height:21px;letter-spacing:0.900px;color:#5a5a5a;">DM</span>
<span class="t" style="left:660.30px;top:1125px;font-size:18.20px;line-height:21px;letter-spacing:-1.100px;color:#170f3f;font-weight:700;">19%</span>
</div>
</body>
</html>
